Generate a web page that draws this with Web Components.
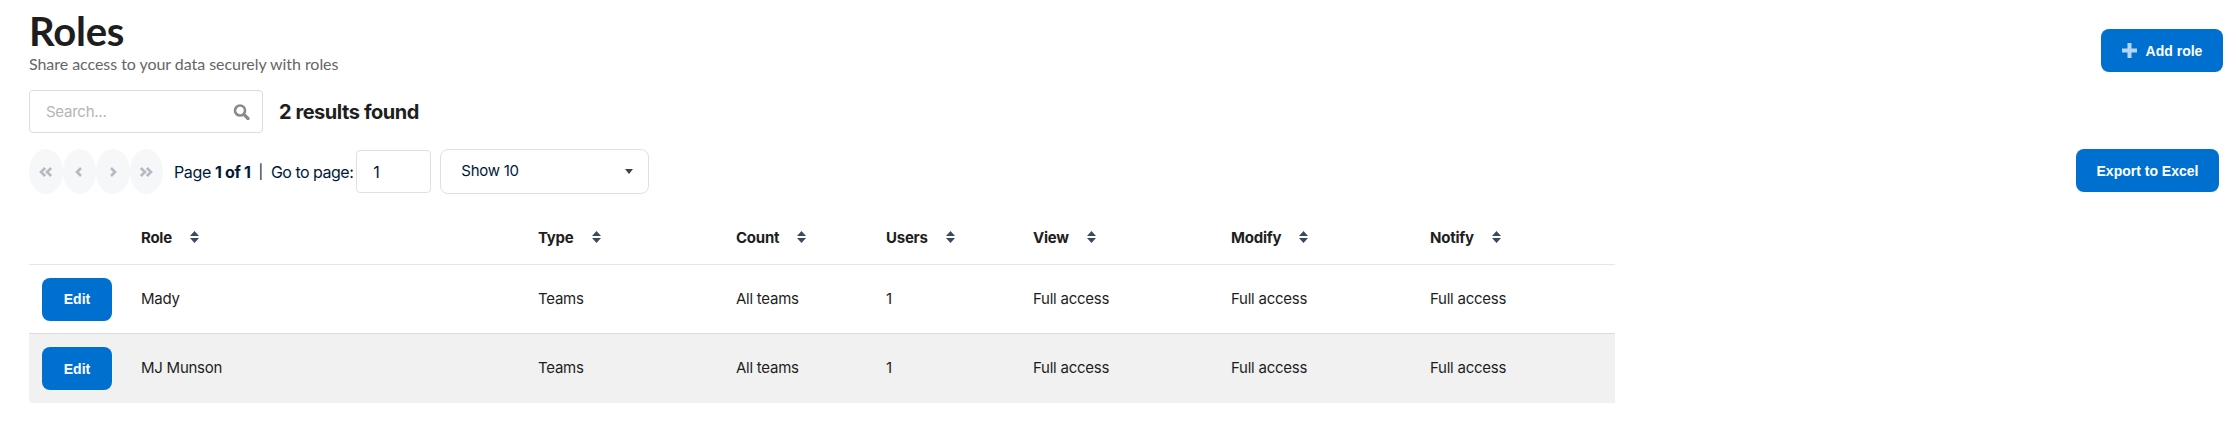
<!DOCTYPE html>
<html>
<head>
<meta charset="utf-8">
<title>Roles</title>
<style>
html, body { margin: 0; background: #fff; }
body { font-family: "Inter", "Liberation Sans", sans-serif; color: #1e1e1e; letter-spacing: -0.25px; }
</style>
</head>
<body>
<roles-page></roles-page>

<script>
class UiButton extends HTMLElement {
    constructor() {
        super();
        this.attachShadow({mode: 'open'});
        this.shadowRoot.innerHTML = `
        <style>
        :host {
            display : inline-flex;
            align-items : center;
            justify-content : center;
            gap : 9px;
            height : 43px;
            box-sizing : border-box;
            background : #0070d0;
            color : #fff;
            border-radius : 8px;
            font : 700 14px "Liberation Sans", sans-serif;
            letter-spacing : 0;
            cursor : pointer;
        }
        </style>
        <slot name="icon"></slot><slot></slot>`;
    }
}
customElements.define('ui-button', UiButton);

class SearchBox extends HTMLElement {
    constructor() {
        super();
        this.attachShadow({mode: 'open'});
        this.shadowRoot.innerHTML = `
        <style>
        :host {
            display : flex;
            align-items : center;
            justify-content : space-between;
            box-sizing : border-box;
            width : 234px;
            height : 43px;
            padding : 0 12px 0 16px;
            border : 1px solid #dcdcdc;
            border-radius : 4px;
            color : #b5b5b5;
            font-size : 15px;
            font-weight : 400;
        }
        svg { display : block; }
        </style>
        <span>Search...</span>
        <svg width="17" height="16" viewBox="0 0 17 16" fill="none" stroke="#8a8a8a">
            <circle cx="7" cy="6.500" r="5" stroke-width="2.600"/>
            <path d="M10.800 10.300 15 14.500" stroke-width="3.200" stroke-linecap="round"/>
        </svg>`;
    }
}
customElements.define('search-box', SearchBox);

class PagerBar extends HTMLElement {
    constructor() {
        super();
        this.attachShadow({mode: 'open'});
        this.shadowRoot.innerHTML = `
        <style>
        :host {
            display : flex;
            align-items : center;
            font-size : 16px;
            letter-spacing : -0.35px;
            color : #00193a;
        }
        .nav {
            display : flex;
            align-items : center;
            justify-content : center;
            width : 33.500px;
            height : 45px;
            border-radius : 50%;
            background : #f6f7f9;
        }
        .nav svg { display : block; fill : none; stroke : #b4bac2; stroke-width : 2.600; }
        .label { margin-left : 11px; white-space : pre; }
        b { font-weight : 700; }
        .sep { margin : 0 8px; font-size : 14px; }
        .goto { letter-spacing : -0.5px; }
        .page {
            display : flex;
            align-items : center;
            box-sizing : border-box;
            width : 75px;
            height : 43px;
            margin-left : 3px;
            padding-left : 16px;
            border : 1px solid #e0e0e0;
            border-radius : 4px;
            background : #fff;
        }
        .show {
            display : flex;
            align-items : center;
            justify-content : space-between;
            box-sizing : border-box;
            width : 209px;
            height : 45px;
            margin-left : 9px;
            padding : 0 15px 3px 20px;
            border : 1px solid #e0e0e0;
            border-radius : 8px;
            font-size : 15px;
            letter-spacing : -0.25px;
        }
        .caret { width : 0; height : 0; margin-top : 3px; border : 4px solid transparent; border-top : 5px solid #3a4354; border-bottom : 0; }
        </style>
        <div class="nav"><svg width="14" height="10" viewBox="0 0 14 10"><path d="M6.200 1 2 5l4.200 4M12.200 1 8 5l4.200 4"/></svg></div>
        <div class="nav"><svg width="8" height="10" viewBox="0 0 8 10"><path d="M6 1 2 5l4 4"/></svg></div>
        <div class="nav"><svg width="8" height="10" viewBox="0 0 8 10"><path d="M2 1l4 4-4 4"/></svg></div>
        <div class="nav"><svg width="14" height="10" viewBox="0 0 14 10"><path d="M1.800 1 6 5 1.800 9M7.800 1 12 5 7.800 9"/></svg></div>
        <span class="label">Page <b>1 of 1</b></span>
        <span class="sep">|</span>
        <span class="goto">Go to page:</span>
        <div class="page">1</div>
        <div class="show"><span>Show 10</span><span class="caret"></span></div>`;
    }
}
customElements.define('pager-bar', PagerBar);

class SortLabel extends HTMLElement {
    constructor() {
        super();
        this.attachShadow({mode: 'open'});
        this.shadowRoot.innerHTML = `
        <style>
        :host {
            display : inline-flex;
            align-items : center;
            gap : 18px;
            font-weight : 700;
            font-size : 15px;
        }
        svg { display : block; fill : #3b4a62; }
        </style>
        <slot></slot>
        <svg width="9" height="12" viewBox="0 0 9 12"><path d="M4.500 0 9 5H0zM0 7h9L4.500 12z"/></svg>`;
    }
}
customElements.define('sort-label', SortLabel);

class RolesTable extends HTMLElement {
    constructor() {
        super();
        this.attachShadow({mode: 'open'});
        const heads = ['Role', 'Type', 'Count', 'Users', 'View', 'Modify', 'Notify'];
        const rows = [
            ['Mady', 'Teams', 'All teams', '1', 'Full access', 'Full access', 'Full access'],
            ['MJ Munson', 'Teams', 'All teams', '1', 'Full access', 'Full access', 'Full access'],
        ];
        this.shadowRoot.innerHTML = `
        <style>
        :host {
            display : block;
            width : 1586px;
            margin-left : 29px;
            font-size : 15px;
        }
        .row {
            display : grid;
            grid-template-columns : 99px 397px 198px 150px 147px 198px 199px 198px;
            align-items : center;
        }
        .cell { padding-left : 13px; }
        .body .cell + .cell { padding-bottom : 2px; }
        .head { height : 71px; padding-top : 16px; border-bottom : 1px solid #e6e6e6; box-sizing : border-box; }
        .body { height : 68px; box-sizing : border-box; }
        .body + .body { height : 70px; border-top : 1px solid #dcdcdc; background : #f1f1f1; border-bottom-left-radius : 4px; }
        ui-button { width : 70px; vertical-align : top; }
        </style>
        <div class="row head">
            <div class="cell"></div>
            ${heads.map(h => `<div class="cell"><sort-label>${h}</sort-label></div>`).join('')}
        </div>
        ${rows.map(r => `
        <div class="row body">
            <div class="cell"><ui-button>Edit</ui-button></div>
            ${r.map(c => `<div class="cell">${c}</div>`).join('')}
        </div>`).join('')}`;
    }
}
customElements.define('roles-table', RolesTable);

class RolesPage extends HTMLElement {
    constructor() {
        super();
        this.attachShadow({mode: 'open'});
        this.shadowRoot.innerHTML = `
        <style>
        :host { display : block; width : 2236px; height : 422px; overflow : hidden; }
        .top {
            display : flex;
            justify-content : space-between;
            align-items : flex-start;
            height : 90px;
            padding : 0 13px 0 29px;
        }
        .title { font-family : "Lato", sans-serif; letter-spacing : 0; }
        h1 { margin : 8px 0 0; font-size : 40px; line-height : 46px; font-weight : 700; color : #1e1e1e; letter-spacing : -0.2px; }
        p { margin : 0; font-size : 16px; line-height : 20px; color : #666; letter-spacing : -0.05px; }
        .top ui-button { width : 122px; margin-top : 29px; }
        .search {
            display : flex;
            align-items : center;
            gap : 16px;
            padding-left : 29px;
            font-size : 20px;
            font-weight : 700;
            letter-spacing : -0.45px;
        }
        .tools {
            display : flex;
            align-items : flex-start;
            justify-content : space-between;
            margin-top : 16px;
            padding : 0 17px 0 29px;
        }
        .tools ui-button { width : 143px; }
        search-box { letter-spacing : -0.25px; }
        </style>
        <div class="top">
            <div class="title"><h1>Roles</h1><p>Share access to your data securely with roles</p></div>
            <ui-button>
                <svg slot="icon" width="15" height="15" viewBox="0 0 15 15" fill="#b5d5f3"><path d="M5.500 0h4v5.500H15v4H9.500V15h-4V9.500H0v-4h5.500z"/></svg>
                Add role
            </ui-button>
        </div>
        <div class="search"><search-box></search-box><span>2 results found</span></div>
        <div class="tools"><pager-bar></pager-bar><ui-button>Export to Excel</ui-button></div>
        <roles-table></roles-table>`;
    }
}
customElements.define('roles-page', RolesPage);
</script>
</body>
</html>
